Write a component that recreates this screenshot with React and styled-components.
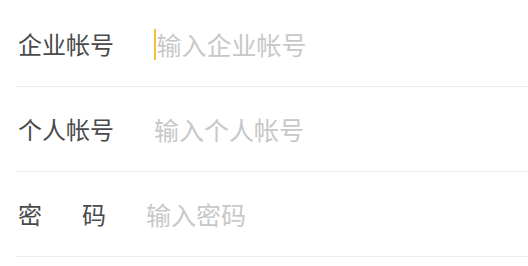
import React from 'react';
import styled, { createGlobalStyle } from 'styled-components';

const GlobalStyle = createGlobalStyle`
  html, body {
    margin: 0;
    padding: 0;
    background: #ffffff;
  }
  body {
    font-family: "Noto Sans CJK SC", "Noto Sans", sans-serif;
  }
`;

// Form wrapper
const Form = styled.form`
  display: flex;
  flex-direction: column;
  padding-top: 2px;
  padding-left: 17px;
  width: 511px;
`;

const Row = styled.label`
  display: flex;
  align-items: center;
  height: 84px;
  border-bottom: 1px solid #ececec;
  padding-left: 1px;
`;

const Label = styled.span`
  display: flex;
  justify-content: space-between;
  width: ${(p) => (p.width ? `${p.width}px` : 'auto')};
  flex-shrink: 0;
  margin-right: ${(p) => p.gap}px;
  font-size: 24px;
  line-height: 32px;
  color: #4a4a4a;
`;

const Caret = styled.span`
  width: 1.5px;
  height: 31px;
  margin-right: 1px;
  background: #f2c13c;
  flex-shrink: 0;
`;

const Input = styled.input`
  flex: 1;
  min-width: 0;
  border: none;
  outline: none;
  padding: 0;
  background: transparent;
  font-family: "Noto Sans CJK SC", "Noto Sans", sans-serif;
  font-size: 25px;
  line-height: 32px;
  color: #333;

  &::placeholder {
    color: #c8c8c8;
  }
`;

const fields = [
  { label: '企业帐号', placeholder: '输入企业帐号', gap: 40, focused: true },
  { label: '个人帐号', placeholder: '输入个人帐号', gap: 40 },
  { label: '密码', placeholder: '输入密码', gap: 40, width: 88, type: 'password' },
];

const LoginForm = () => (
  <Form onSubmit={(e) => e.preventDefault()}>
    {fields.map((f) => (
      <Row key={f.label}>
        <Label width={f.width} gap={f.gap}>
          {f.label.split('').map((ch) => (
            <span key={ch}>{ch}</span>
          ))}
        </Label>
        {f.focused && <Caret />}
        <Input type={f.type || 'text'} placeholder={f.placeholder} />
      </Row>
    ))}
  </Form>
);

export default function App() {
  return (
    <>
      <GlobalStyle />
      <LoginForm />
    </>
  );
}
